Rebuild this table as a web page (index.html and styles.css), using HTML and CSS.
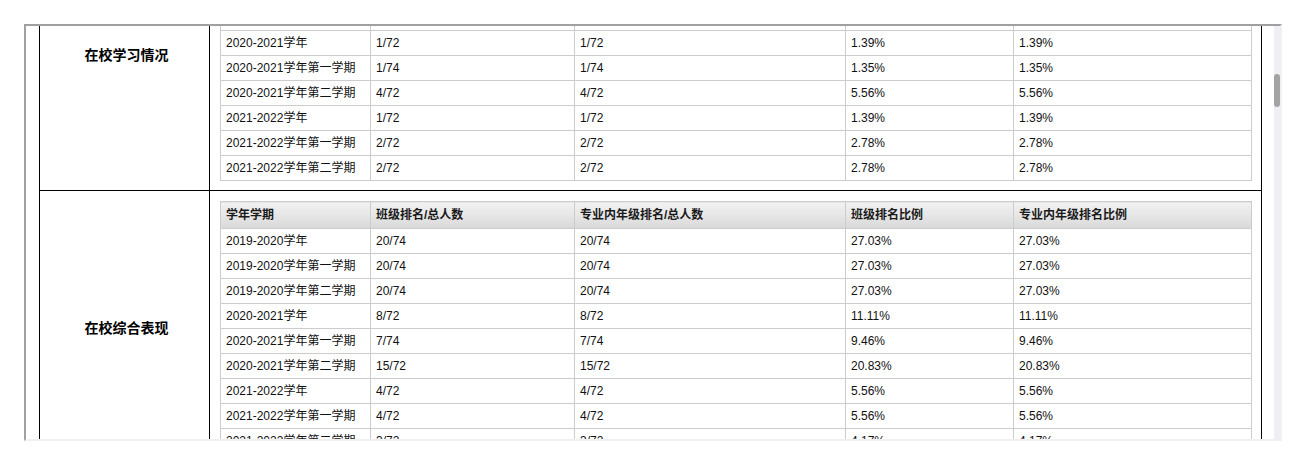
FILE: index.html
```html
<!DOCTYPE html>
<html lang="zh-CN">
<head>
<meta charset="utf-8">
<title>在校表现</title>
<link rel="stylesheet" href="styles.css">
</head>
<body>
<div class="frame">
  <div class="viewport" id="viewport">
    <table class="outer">
      <colgroup><col class="c-label"><col class="c-body"></colgroup>
      <tr>
        <td class="label">在校学习情况</td>
        <td class="body">
          <table class="grid">
            <colgroup><col class="g1"><col class="g2"><col class="g3"><col class="g4"><col class="g5"></colgroup>
            <tr class="head"><th>学年学期</th><th>班级排名/总人数</th><th>专业内年级排名/总人数</th><th>班级排名比例</th><th>专业内年级排名比例</th></tr>
            <tr><td>2019-2020学年</td><td>3/74</td><td>3/74</td><td>4.05%</td><td>4.05%</td></tr>
            <tr><td>2019-2020学年第一学期</td><td>3/74</td><td>3/74</td><td>4.05%</td><td>4.05%</td></tr>
            <tr><td>2019-2020学年第二学期</td><td>2/74</td><td>2/74</td><td>2.70%</td><td>2.70%</td></tr>
            <tr><td>2020-2021学年</td><td>1/72</td><td>1/72</td><td>1.39%</td><td>1.39%</td></tr>
            <tr><td>2020-2021学年第一学期</td><td>1/74</td><td>1/74</td><td>1.35%</td><td>1.35%</td></tr>
            <tr><td>2020-2021学年第二学期</td><td>4/72</td><td>4/72</td><td>5.56%</td><td>5.56%</td></tr>
            <tr><td>2021-2022学年</td><td>1/72</td><td>1/72</td><td>1.39%</td><td>1.39%</td></tr>
            <tr><td>2021-2022学年第一学期</td><td>2/72</td><td>2/72</td><td>2.78%</td><td>2.78%</td></tr>
            <tr><td>2021-2022学年第二学期</td><td>2/72</td><td>2/72</td><td>2.78%</td><td>2.78%</td></tr>
          </table>
        </td>
      </tr>
      <tr>
        <td class="label">在校综合表现</td>
        <td class="body">
          <table class="grid">
            <colgroup><col class="g1"><col class="g2"><col class="g3"><col class="g4"><col class="g5"></colgroup>
            <tr class="head"><th>学年学期</th><th>班级排名/总人数</th><th>专业内年级排名/总人数</th><th>班级排名比例</th><th>专业内年级排名比例</th></tr>
            <tr><td>2019-2020学年</td><td>20/74</td><td>20/74</td><td>27.03%</td><td>27.03%</td></tr>
            <tr><td>2019-2020学年第一学期</td><td>20/74</td><td>20/74</td><td>27.03%</td><td>27.03%</td></tr>
            <tr><td>2019-2020学年第二学期</td><td>20/74</td><td>20/74</td><td>27.03%</td><td>27.03%</td></tr>
            <tr><td>2020-2021学年</td><td>8/72</td><td>8/72</td><td>11.11%</td><td>11.11%</td></tr>
            <tr><td>2020-2021学年第一学期</td><td>7/74</td><td>7/74</td><td>9.46%</td><td>9.46%</td></tr>
            <tr><td>2020-2021学年第二学期</td><td>15/72</td><td>15/72</td><td>20.83%</td><td>20.83%</td></tr>
            <tr><td>2021-2022学年</td><td>4/72</td><td>4/72</td><td>5.56%</td><td>5.56%</td></tr>
            <tr><td>2021-2022学年第一学期</td><td>4/72</td><td>4/72</td><td>5.56%</td><td>5.56%</td></tr>
            <tr><td>2021-2022学年第二学期</td><td>3/72</td><td>3/72</td><td>4.17%</td><td>4.17%</td></tr>
          </table>
        </td>
      </tr>
    </table>
  </div>
  <div class="scrollbar"><div class="thumb"></div></div>
</div>
<script src="script.js"></script>
</body>
</html>
```

FILE: styles.css
```css
html, body {
  margin: 0;
  background: #ffffff;
}
body {
  padding: 24px 0 0 24px;
  font-family: "Liberation Sans", "Noto Sans CJK SC", sans-serif;
  font-size: 12px;
  color: #111;
}
.frame {
  box-sizing: border-box;
  width: 1258px;
  height: 417px;
  border-top: 2px solid #a0a0a0;
  border-left: 2px solid #a0a0a0;
  border-right: 2px solid #f0f0f0;
  border-bottom: 2px solid #f0f0f0;
  display: flex;
}
.viewport {
  flex: 1;
  overflow: hidden;
}
.scrollbar {
  width: 6px;
  background: #f0f0f4;
}
.thumb {
  margin-top: 48px;
  height: 33px;
  border-radius: 3px;
  background: #a3a3a3;
}
.outer {
  border-collapse: collapse;
  table-layout: fixed;
  width: 1223px;
  margin: 0 0 0 13px;
}
.c-label { width: 170px; }
.outer > tbody > tr > td {
  border: 1px solid #000;
}
.label {
  text-align: center;
  vertical-align: middle;
  font-weight: bold;
  font-size: 14px;
  color: #000;
  padding: 0 0 0 4px;
}
.body {
  padding: 10px 10px 9px 10px;
}
.grid {
  border-collapse: collapse;
  table-layout: fixed;
  width: 1031px;
}
.g1 { width: 150px; }
.g2 { width: 204px; }
.g3 { width: 271px; }
.g4 { width: 168px; }
.g5 { width: 238px; }
.grid td, .grid th {
  border: 1px solid #cccccc;
  padding: 1px 5px 0 5px;
  height: 23px;
  line-height: 23px;
  text-align: left;
  white-space: nowrap;
  overflow: hidden;
}
.grid .head th {
  height: 25px;
  line-height: 25px;
  font-weight: bold;
  color: #1a1a1a;
  background: linear-gradient(#f2f2f2, #d9d9d9);
}
```

FILE: script.js
```js
document.getElementById('viewport').scrollTop = 109;
```
